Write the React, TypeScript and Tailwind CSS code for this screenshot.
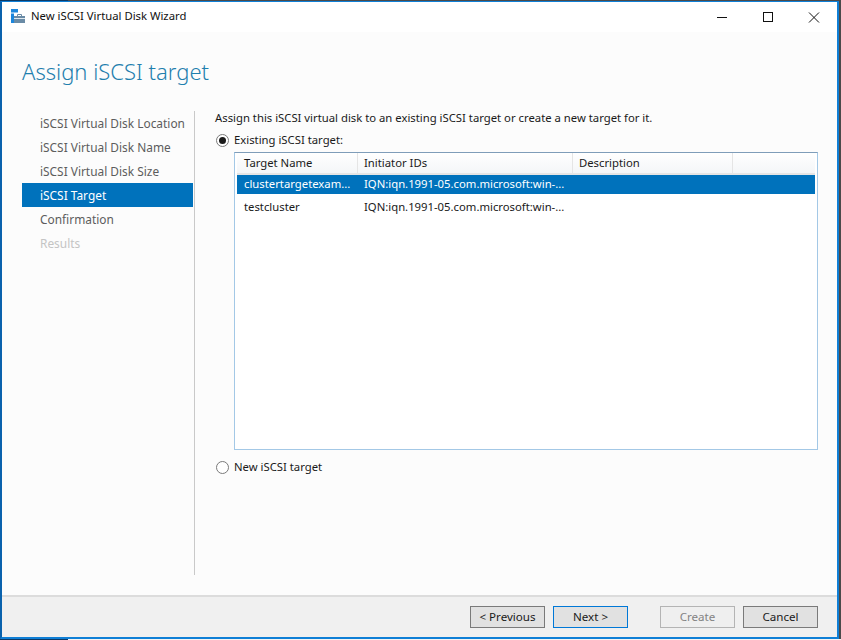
const font = { fontFamily: '"Noto Sans", sans-serif' };

function Radio({ checked }: { checked?: boolean }) {
  return (
    <span className="flex h-[13px] w-[13px] shrink-0 items-center justify-center rounded-full border border-[#7a7a7a] bg-white">
      {checked && <span className="h-[7px] w-[7px] rounded-full bg-[#1a1a1a]" />}
    </span>
  );
}

function Btn({ label, variant = "normal" }: { label: string; variant?: "normal" | "primary" | "disabled" }) {
  const cls =
    variant === "primary"
      ? "border-[#0078d7] bg-[#e1e1e1] text-[#1a1a1a]"
      : variant === "disabled"
      ? "border-[#b4b4b4] bg-[#efefef] text-[#838383]"
      : "border-[#7a7a7a] bg-[#e1e1e1] text-[#1a1a1a]";
  return (
    <div className={`flex h-[22px] w-[75px] items-center justify-center border text-[11.6px] ${cls}`}>{label}</div>
  );
}

const steps = [
  { t: "iSCSI Virtual Disk Location" },
  { t: "iSCSI Virtual Disk Name" },
  { t: "iSCSI Virtual Disk Size" },
  { t: "iSCSI Target", active: true },
  { t: "Confirmation" },
  { t: "Results", off: true },
];

const ROWS = [
  { a: "clustertargetexam...", b: "IQN:iqn.1991-05.com.microsoft:win-...", sel: true },
  { a: "testcluster", b: "IQN:iqn.1991-05.com.microsoft:win-..." },
];

function HeadCell({ w, label }: { w: string; label?: string }) {
  return (
    <div className={`flex h-full items-center border-r border-[#e5e5e5] pl-[6px] first:pl-[7px] text-[11.3px] text-[#1a1a1a] ${w}`}>
      {label}
    </div>
  );
}

export default function App() {
  return (
    <div className="flex h-[640px] w-[841px] flex-col overflow-hidden bg-[#4a4a4a]" style={font}>
      <div className="flex h-px w-full bg-[#4a4a4a]">
        <div className="w-[68px] bg-[#0d3a66]" />
      </div>
      <div className="flex h-[638px] w-[839px] flex-col border-2 border-t border-[#0f7fd6] border-l-[#0a62ad] bg-[#fcfcfc]">
        <div className="flex h-[30px] shrink-0 items-center bg-white pb-[2px] pl-[9px]">
          <svg width="16" height="16" viewBox="0 0 16 16" className="mr-[4px]">
            <rect x="0" y="1" width="7" height="3.5" fill="#1c86dc" />
            <rect x="0" y="5.5" width="3" height="9.5" fill="#1c86dc" />
            <path d="M6.5 8.5V6.5h4v2" fill="none" stroke="#6a8ba6" />
            <rect x="3" y="8" width="11" height="7" fill="#6a8ba6" />
            <rect x="3" y="10" width="11" height="1" fill="#dfe8ee" />
          </svg>
          <span className="text-[11.3px] text-[#111]">New iSCSI Virtual Disk Wizard</span>
          <div className="ml-auto flex h-full items-center">
            <svg width="46" height="30" viewBox="0 0 46 30"><path d="M18 16.5h10" stroke="#111" /></svg>
            <svg width="46" height="30" viewBox="0 0 46 30"><rect x="18.5" y="11.5" width="9" height="9" fill="none" stroke="#111" /></svg>
            <svg width="46" height="30" viewBox="0 0 46 30"><path d="M18 11.5l10 10M28 11.5l-10 10" stroke="#111" /></svg>
          </div>
        </div>

        <div className="flex min-h-0 flex-1 flex-col">
          <h1 className="mt-[21px] h-[36px] pl-[20px] text-[22px] leading-[36px] font-light text-[#1f7fae]">Assign iSCSI target</h1>
          <div className="mt-[22px] flex h-[464px] pl-[20px]">
            <div className="w-[171px]">
              {steps.map((s) => (
                <div
                  key={s.t}
                  className={`flex h-6 items-center pl-[18px] pt-px text-[11.9px] ${
                    s.active ? "bg-[#0072bc] text-white" : s.off ? "text-[#c4c4c4]" : "text-[#5c5c5c]"
                  }`}
                >
                  {s.t}
                </div>
              ))}
            </div>
            <div className="ml-px w-px bg-[#c9c9c9]" />
            <div className="ml-5 flex-1 pr-[19px] text-[11.3px] text-[#1a1a1a]">
              <div className="h-[14px] leading-[14px]">Assign this iSCSI virtual disk to an existing iSCSI target or create a new target for it.</div>
              <div className="mt-[8px] flex h-[15px] items-center gap-[5px] pl-px">
                <Radio checked />
                <span>Existing iSCSI target:</span>
              </div>
              <div className="ml-[19px] mt-[4px] h-[298px] border border-[#a3c8e6] border-t-[#7f9db9] bg-white px-[2px]">
                <div className="flex h-[22px] items-center border-b-2 border-[#e5e5e5] bg-gradient-to-b from-white to-[#f4f6f8]">
                  <HeadCell w="w-[121px]" label="Target Name" />
                  <HeadCell w="w-[215px]" label="Initiator IDs" />
                  <HeadCell w="w-[160px]" label="Description" />
                </div>
                {ROWS.map((r) => (
                  <div
                    key={r.a}
                    className={`mb-1 flex h-[19px] items-center text-[11.3px] ${r.sel ? "bg-[#0072bc] text-white" : "text-[#1a1a1a]"}`}
                  >
                    <div className="w-[120px] pl-[7px]">{r.a}</div>
                    <div className="w-[215px] pl-[7px]">{r.b}</div>
                  </div>
                ))}
              </div>
              <div className="mt-[10px] flex h-[15px] items-center gap-[5px] pl-px">
                <Radio />
                <span>New iSCSI target</span>
              </div>
            </div>
          </div>
        </div>

        <div className="flex h-[42px] shrink-0 items-center border-t-2 border-[#dcdcdc] bg-[#f0f0f0] pr-[19px]">
          <div className="ml-auto flex gap-2">
            <Btn label="< Previous" />
            <Btn label="Next >" variant="primary" />
            <div className="ml-6">
              <Btn label="Create" variant="disabled" />
            </div>
            <Btn label="Cancel" />
          </div>
        </div>
      </div>
      <div className="flex h-px w-full bg-[#f4f4f4]">
        <div className="w-[68px] bg-[#0d3a66]" />
      </div>
    </div>
  );
}
